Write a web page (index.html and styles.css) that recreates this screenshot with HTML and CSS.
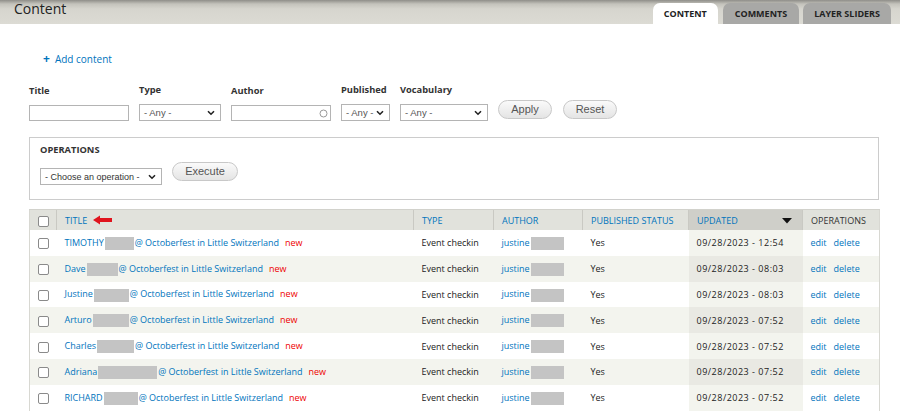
FILE: index.html
```html
<!DOCTYPE html>
<html>
<head>
<meta charset="utf-8">
<link rel="stylesheet" href="styles.css">
</head>
<body>
<div class="branding">
  <h1 class="page-title">Content</h1>
  <ul class="tabs">
    <li class="tab active">CONTENT</li>
    <li class="tab">COMMENTS</li>
    <li class="tab last">LAYER SLIDERS</li>
  </ul>
</div>
<div class="page">
  <div class="actions"><span class="plus">+</span><a class="link">Add content</a></div>

  <div class="filters">
    <div class="fitem">
      <label>Title</label>
      <input class="text w100" type="text">
    </div>
    <div class="fitem">
      <label>Type</label>
      <span class="sel w82"><span class="val">- Any -</span><svg class="chev" width="8" height="6" viewBox="0 0 8 6"><path d="M1 1.2 L4 4.2 L7 1.2" fill="none" stroke="#222" stroke-width="1.6"/></svg></span>
    </div>
    <div class="fitem">
      <label>Author</label>
      <span class="text w100 auto"><svg class="circ" width="9" height="9" viewBox="0 0 9 9"><circle cx="4.5" cy="4.5" r="3.5" fill="none" stroke="#999" stroke-width="1"/></svg></span>
    </div>
    <div class="fitem">
      <label>Published</label>
      <span class="sel w49"><span class="val">- Any -</span><svg class="chev" width="8" height="6" viewBox="0 0 8 6"><path d="M1 1.2 L4 4.2 L7 1.2" fill="none" stroke="#222" stroke-width="1.6"/></svg></span>
    </div>
    <div class="fitem">
      <label>Vocabulary</label>
      <span class="sel w88"><span class="val">- Any -</span><svg class="chev" width="8" height="6" viewBox="0 0 8 6"><path d="M1 1.2 L4 4.2 L7 1.2" fill="none" stroke="#222" stroke-width="1.6"/></svg></span>
    </div>
    <div class="fbtns">
      <span class="btn apply">Apply</span>
      <span class="btn reset">Reset</span>
    </div>
  </div>

  <div class="ops">
    <div class="ops-title">OPERATIONS</div>
    <div class="ops-row">
      <span class="sel w122"><span class="val dark">- Choose an operation -</span><svg class="chev" width="8" height="6" viewBox="0 0 8 6"><path d="M1 1.2 L4 4.2 L7 1.2" fill="none" stroke="#222" stroke-width="1.6"/></svg></span>
      <span class="btn exec">Execute</span>
    </div>
  </div>

  <table class="grid">
    <colgroup>
      <col style="width:27px"><col style="width:357px"><col style="width:80px"><col style="width:89px"><col style="width:106px"><col style="width:114px"><col style="width:77px">
    </colgroup>
    <thead>
      <tr>
        <th><span class="cb"></span></th>
        <th><a class="hl">TITLE</a><svg class="redarrow" width="20" height="10" viewBox="0 0 20 10"><path d="M0 5 L7 0.5 L7 3 L19 3 L19 7 L7 7 L7 9.5 Z" fill="#e0141e"/></svg></th>
        <th><a class="hl">TYPE</a></th>
        <th><a class="hl">AUTHOR</a></th>
        <th><a class="hl">PUBLISHED STATUS</a></th>
        <th class="active"><a class="hl">UPDATED</a><svg class="sort" width="10" height="6" viewBox="0 0 10 6"><path d="M0 0 L10 0 L5 5.5 Z" fill="#111"/></svg></th>
        <th class="plain">OPERATIONS</th>
      </tr>
    </thead>
    <tbody>
      <tr class="odd">
        <td><span class="cb"></span></td>
        <td><a class="tl">TIMOTHY</a><span class="redact" style="width:29px"></span><a class="tl">@ Octoberfest in Little Switzerland</a><span class="new">new</span></td>
        <td>Event checkin</td>
        <td><a class="tl">justine</a><span class="redact ra"></span></td>
        <td>Yes</td>
        <td class="active date">09/28/2023 - 12:54</td>
        <td><a class="tl">edit</a><a class="tl gap">delete</a></td>
      </tr>
      <tr class="even">
        <td><span class="cb"></span></td>
        <td><a class="tl">Dave</a><span class="redact" style="width:31px"></span><a class="tl">@ Octoberfest in Little Switzerland</a><span class="new">new</span></td>
        <td>Event checkin</td>
        <td><a class="tl">justine</a><span class="redact ra"></span></td>
        <td>Yes</td>
        <td class="active date">09/28/2023 - 08:03</td>
        <td><a class="tl">edit</a><a class="tl gap">delete</a></td>
      </tr>
      <tr class="odd">
        <td><span class="cb"></span></td>
        <td><a class="tl">Justine</a><span class="redact" style="width:35px"></span><a class="tl">@ Octoberfest in Little Switzerland</a><span class="new">new</span></td>
        <td>Event checkin</td>
        <td><a class="tl">justine</a><span class="redact ra"></span></td>
        <td>Yes</td>
        <td class="active date">09/28/2023 - 08:03</td>
        <td><a class="tl">edit</a><a class="tl gap">delete</a></td>
      </tr>
      <tr class="even">
        <td><span class="cb"></span></td>
        <td><a class="tl">Arturo</a><span class="redact" style="width:36px"></span><a class="tl">@ Octoberfest in Little Switzerland</a><span class="new">new</span></td>
        <td>Event checkin</td>
        <td><a class="tl">justine</a><span class="redact ra"></span></td>
        <td>Yes</td>
        <td class="active date">09/28/2023 - 07:52</td>
        <td><a class="tl">edit</a><a class="tl gap">delete</a></td>
      </tr>
      <tr class="odd">
        <td><span class="cb"></span></td>
        <td><a class="tl">Charles</a><span class="redact" style="width:37px"></span><a class="tl">@ Octoberfest in Little Switzerland</a><span class="new">new</span></td>
        <td>Event checkin</td>
        <td><a class="tl">justine</a><span class="redact ra"></span></td>
        <td>Yes</td>
        <td class="active date">09/28/2023 - 07:52</td>
        <td><a class="tl">edit</a><a class="tl gap">delete</a></td>
      </tr>
      <tr class="even">
        <td><span class="cb"></span></td>
        <td><a class="tl">Adriana</a><span class="redact" style="width:59px"></span><a class="tl">@ Octoberfest in Little Switzerland</a><span class="new">new</span></td>
        <td>Event checkin</td>
        <td><a class="tl">justine</a><span class="redact ra"></span></td>
        <td>Yes</td>
        <td class="active date">09/28/2023 - 07:52</td>
        <td><a class="tl">edit</a><a class="tl gap">delete</a></td>
      </tr>
      <tr class="odd">
        <td><span class="cb"></span></td>
        <td><a class="tl">RICHARD</a><span class="redact" style="width:34px"></span><a class="tl">@ Octoberfest in Little Switzerland</a><span class="new">new</span></td>
        <td>Event checkin</td>
        <td><a class="tl">justine</a><span class="redact ra"></span></td>
        <td>Yes</td>
        <td class="active date">09/28/2023 - 07:52</td>
        <td><a class="tl">edit</a><a class="tl gap">delete</a></td>
      </tr>
    </tbody>
  </table>
</div>
</body>
</html>
```
FILE: styles.css
```css
html, body {
  margin: 0;
  padding: 0;
  background: #fff;
  font-family: "Open Sans", "DejaVu Sans", sans-serif;
  font-size: 10px;
  color: #333;
  overflow: hidden;
}
.branding {
  height: 24px;
  background: linear-gradient(to bottom, #8f8e89 0px, #c4c3bc 4px, #d6d5ce 9px, #dcdbd4 24px);
  display: flex;
  justify-content: space-between;
  align-items: flex-end;
  padding: 0 9px 0 14px;
}
.page-title {
  margin: 0;
  align-self: flex-start;
  font-family: "Open Sans", sans-serif;
  font-weight: normal;
  font-size: 14px;
  line-height: 18px;
  color: #222;
}
.tabs {
  list-style: none;
  margin: 0;
  padding: 0;
  display: flex;
  gap: 4px;
}
.tab {
  height: 21px;
  line-height: 21px;
  padding: 0 12px;
  background: #a8a8a6;
  border-radius: 7px 7px 0 0;
  font-weight: bold;
  font-size: 9px;
  color: #222;
}
.tab.last { padding: 0 11px; }
.tab.active {
  background: #fff;
  padding: 0 11px;
  margin-right: 1px;
}
.page {
  padding: 0 21px 0 29px;
}
.actions {
  padding: 27px 0 0 14px;
  height: 16px;
  line-height: 16px;
  display: flex;
  align-items: center;
}
.plus {
  color: #0074bd;
  font-weight: bold;
  font-size: 12px;
  margin-right: 5px;
}
.link, .tl, .hl {
  color: #0074bd;
  text-decoration: none;
}
.filters {
  display: flex;
  align-items: flex-end;
  margin-top: 16px;
  gap: 10px;
}
.fitem {
  display: flex;
  flex-direction: column;
}
.fitem label {
  font-weight: bold;
  font-size: 9.3px;
  line-height: 14px;
  margin-bottom: 7px;
  color: #333;
}
.text {
  box-sizing: border-box;
  height: 16px;
  border: 1px solid #b4b4b4;
  padding: 0;
  margin: 0;
  background: #fff;
  display: block;
}
.w100 { width: 100px; }
.auto { position: relative; }
.circ { position: absolute; right: 2px; top: 2.5px; }
.sel {
  box-sizing: border-box;
  height: 17px;
  border: 1px solid #b4b4b4;
  background: #fff;
  position: relative;
  display: flex;
  align-items: center;
  padding-left: 4px;
  font-family: "Liberation Sans", Arial, sans-serif;
  font-size: 9.5px;
  color: #555;
}
.sel .val.dark { color: #333; font-size: 9px; }
.chev { position: absolute; right: 5px; top: 5px; }
.w82 { width: 82px; }
.w49 { width: 49px; }
.w88 { width: 88px; }
.w122 { width: 122px; }
.fbtns {
  display: flex;
  gap: 11px;
  margin-bottom: 2px;
}
.btn {
  box-sizing: border-box;
  height: 19px;
  line-height: 17px;
  border: 1px solid #c8c8c8;
  border-radius: 10px;
  background: linear-gradient(to bottom, #fafafa, #e4e4e4);
  font-family: "Liberation Sans", Arial, sans-serif;
  font-size: 11px;
  color: #555;
  text-align: center;
}
.apply { width: 54px; }
.reset { width: 54px; }
.ops {
  margin-top: 16px;
  box-sizing: border-box;
  height: 63px;
  border: 1px solid #ccc;
  padding: 5px 10px 0 10px;
}
.ops-title {
  font-weight: bold;
  font-size: 9.3px;
  line-height: 14px;
}
.ops-row {
  display: flex;
  align-items: flex-start;
  gap: 10px;
  margin-top: 5px;
}
.ops-row .sel { margin-top: 6px; }
.exec { width: 66px; }
.grid {
  margin-top: 9px;
  width: 850px;
  border-collapse: collapse;
  table-layout: fixed;
  border-left: 1px solid #d8d8d2;
  border-right: 1px solid #d8d8d2;
}
.grid th {
  height: 20px;
  padding: 0 0 0 8px;
  background: #e1e2dc;
  border-left: 1px solid #c9c9c3;
  border-top: 1px solid #d2d2cc;
  text-align: left;
  font-weight: normal;
  font-size: 9px;
  white-space: nowrap;
  position: relative;
}
.grid th:first-child { border-left: none; }
.grid th.active { background: #cfcfc9; }
.grid th.plain { color: #333; }
.redarrow { vertical-align: middle; margin-left: 6px; position: relative; top: -1px; }
.sort { position: absolute; right: 10px; top: 8px; }
.grid td {
  height: 25.8px;
  box-sizing: border-box;
  padding: 0 0 0 8px;
  font-size: 9px;
  white-space: nowrap;
  overflow: hidden;
  vertical-align: middle;
  color: #222;
}
.grid td.date { letter-spacing: 0.5px; }
.grid tr.odd td { background: #fff; }
.grid tr.even td { background: #f3f4ee; }
.grid tr.odd td.active { background: #f3f4ee; }
.grid tr.even td.active { background: #e9e9e3; }
.cb {
  display: inline-block;
  width: 9px;
  height: 9px;
  border: 1px solid #8a8a8a;
  border-radius: 2px;
  background: #fff;
  vertical-align: middle;
}
.redact {
  display: inline-block;
  height: 13px;
  background: #c4c4c4;
  vertical-align: middle;
  margin-right: 1px;
  margin-left: 1px;
}
.ra { width: 33px; }
.new {
  color: #e00;
  margin-left: 6px;
}
.gap { margin-left: 7px; }
```
